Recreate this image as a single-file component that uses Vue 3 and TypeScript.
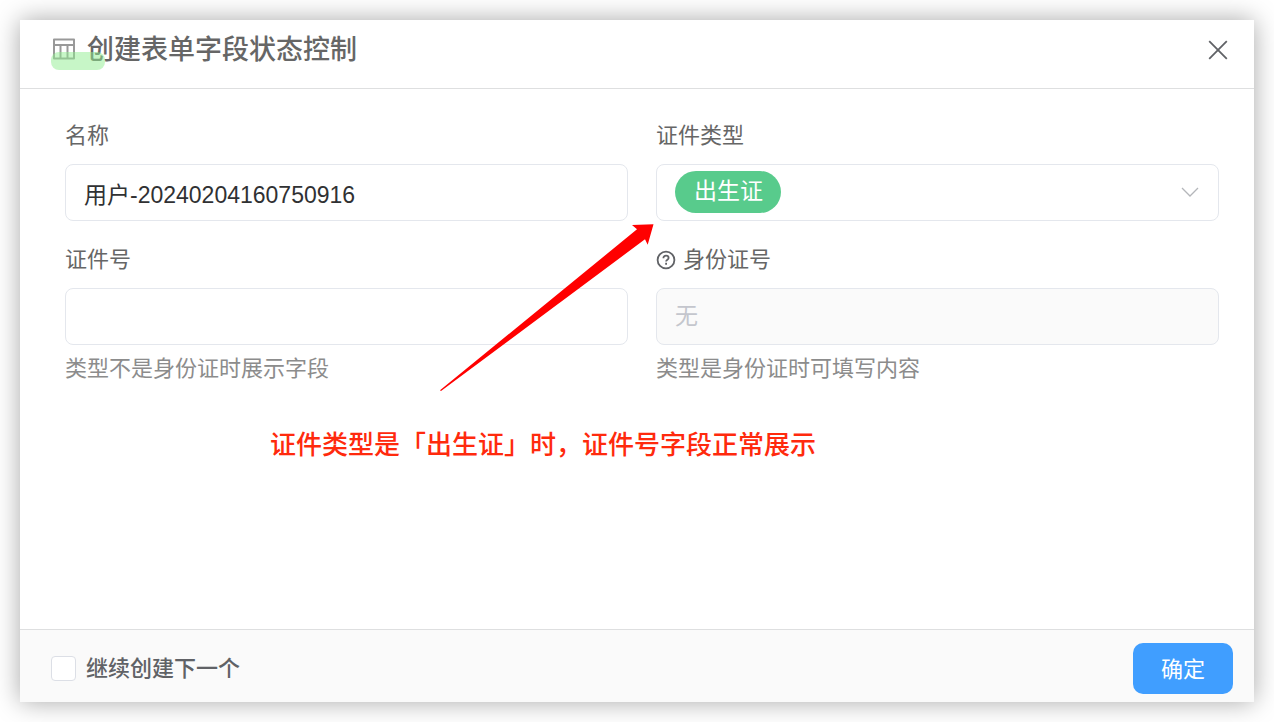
<script setup lang="ts">
import { computed, ref } from 'vue'

const name = ref('用户-20240204160750916')
const certTypes = ['出生证', '身份证', '护照']
const certType = ref('出生证')
const certNo = ref('')
const idNo = ref('')
const keepCreating = ref(false)

const idDisabled = computed(() => certType.value !== '身份证')
const tagStyle = computed(() => ({ width: `calc(${certType.value.length}em + 37px)` }))
</script>

<template>
  <section class="dialog" role="dialog" aria-labelledby="dialog-title">
    <header class="header">
      <span class="mark">
        <svg class="table-icon" viewBox="0 0 24 22" width="24" height="22" fill="none" stroke="#999" stroke-width="2" stroke-linejoin="round">
          <path d="M2 1.500h20v19H2zM2 7h20M8.500 7v13.500M15.500 7v13.500" />
        </svg>
        <i class="highlight"></i>
      </span>
      <h1 id="dialog-title" class="title">创建表单字段状态控制</h1>
      <button class="close" type="button" aria-label="关闭">
        <svg viewBox="0 0 20 20" width="20" height="20" fill="none" stroke="#606266" stroke-width="1.800">
          <path d="M1.200 1.200l17.600 17.600M18.800 1.200L1.200 18.800" />
        </svg>
      </button>
    </header>

    <main class="body">
      <form class="form" @submit.prevent>
        <div class="field">
          <label class="label" for="name">名称</label>
          <input id="name" v-model="name" class="control" type="text" />
        </div>
        <div class="field">
          <label class="label" for="cert-type">证件类型</label>
          <div class="select-box">
            <span class="tag" :style="tagStyle" aria-hidden="true"></span>
            <select id="cert-type" v-model="certType" class="control select">
              <option v-for="t in certTypes" :key="t" :value="t">{{ t }}</option>
            </select>
            <svg class="chevron" viewBox="0 0 18 10" width="18" height="10" fill="none" stroke="#b4b6ba" stroke-width="1.300">
              <path d="M1 1l8 8 8-8" />
            </svg>
          </div>
        </div>
        <div class="field">
          <label class="label" for="cert-no">证件号</label>
          <input id="cert-no" v-model="certNo" class="control" type="text" />
          <p class="help">类型不是身份证时展示字段</p>
        </div>
        <div class="field">
          <label class="label" for="id-no">
            <svg class="question" viewBox="0 0 20 20" width="20" height="20" fill="none" stroke="#606266" stroke-width="1.800">
              <circle cx="10" cy="10" r="8.400" />
              <path d="M7.400 8.300c0-1.600 1-2.600 2.600-2.600s2.600 1 2.600 2.300c0 1.700-2.500 1.700-2.500 3.500" />
              <path d="M10.100 12.800v1.900" />
            </svg>
            身份证号
          </label>
          <input id="id-no" v-model="idNo" class="control" type="text" placeholder="无" :disabled="idDisabled" />
          <p class="help">类型是身份证时可填写内容</p>
        </div>
      </form>

      <p class="note">证件类型是「出生证」时，证件号字段正常展示</p>
      <svg class="arrow" viewBox="0 0 214 168" width="214" height="168" fill="#f00" aria-hidden="true">
        <path d="M0 166.300L197 5.300L192 1L213.500 0.300L207.700 20.700L205 15.300L1 167Z" />
      </svg>
    </main>

    <footer class="footer">
      <label class="next">
        <input v-model="keepCreating" class="check" type="checkbox" />
        继续创建下一个
      </label>
      <button class="confirm" type="button">确定</button>
    </footer>
  </section>
</template>

<style>
body {
  margin: 0;
  background: #fff;
}
</style>

<style scoped>
.dialog,
.dialog * {
  box-sizing: border-box;
}
.dialog {
  display: flex;
  flex-direction: column;
  min-height: calc(100vh - 40px);
  margin: 20px;
  background: #fff;
  box-shadow: 0 0 24px rgba(0, 0, 0, 0.35);
  color: #606266;
  font-family: "Liberation Sans", "Noto Sans CJK SC", sans-serif;
  font-size: 22px;
  line-height: 30px;
}
.header {
  display: flex;
  align-items: center;
  padding: 0 26px 8px 32px;
  height: 69px;
  border-bottom: 1px solid #dedfe0;
}
.mark {
  position: relative;
  display: flex;
  margin-right: 11px;
  padding-bottom: 2px;
}
.highlight {
  position: absolute;
  left: -1px;
  top: 14px;
  width: 54px;
  height: 18px;
  border-radius: 8px;
  background: rgba(144, 238, 144, 0.5);
}
.title {
  margin: 0;
  font-size: 27px;
  font-weight: 500;
  line-height: 40px;
  color: #666;
}
.close {
  display: flex;
  margin-left: auto;
  padding: 0;
  border: 0;
  background: none;
  cursor: pointer;
}
.body {
  position: relative;
  flex: 1;
  padding: 32px 35px 31px 45px;
}
.form {
  display: grid;
  grid-template-columns: 1fr 1fr;
  gap: 24px 28px;
}
.label {
  display: flex;
  align-items: center;
  gap: 7px;
  margin-bottom: 13px;
  color: #666;
}
.control {
  display: block;
  width: 100%;
  height: 57px;
  margin: 0;
  padding: 0 18px;
  border: 1px solid #e4e7ed;
  border-radius: 8px;
  background: transparent;
  color: #303133;
  font-family: inherit;
  font-size: 23px;
  outline: none;
}
.control:focus {
  border-color: #409eff;
}
.control:disabled {
  background: #fafafa;
}
.control::placeholder {
  color: #c4c6cd;
}
.select-box {
  position: relative;
  font-size: 23px;
}
.select {
  position: relative;
  appearance: none;
  padding: 0 60px 3px 37px;
  color: #fff;
}
.select option {
  color: #303133;
}
.tag {
  position: absolute;
  left: 19px;
  top: 7px;
  height: 42px;
  border-radius: 21px;
  background: #58cb8c;
}
.chevron {
  position: absolute;
  right: 20px;
  top: 23px;
  pointer-events: none;
}
.help {
  margin: 9px 0 0;
  color: #8c8c8c;
}
.note {
  margin: 41px 0 0 205px;
  color: #ff2a0d;
  font-size: 26px;
  font-weight: 500;
  line-height: 40px;
}
.arrow {
  position: absolute;
  left: calc(50% - 197px);
  top: 135px;
  pointer-events: none;
}
.footer {
  display: flex;
  align-items: center;
  justify-content: space-between;
  padding: 13px 21px 8px 31px;
  border-top: 1px solid #dedfe0;
  background: #fafafa;
}
.next {
  display: flex;
  align-items: center;
  gap: 10px;
  font-weight: 500;
}
.check {
  appearance: none;
  width: 25px;
  height: 25px;
  margin: 0;
  border: 1px solid #dcdfe6;
  border-radius: 4px;
  background: #fff;
}
.check:checked {
  border-color: #409eff;
  background: #409eff;
}
.confirm {
  height: 51px;
  padding: 0 28px 4px;
  border: 0;
  border-radius: 10px;
  background: #409eff;
  color: #fff;
  font-family: inherit;
  font-size: 22px;
  cursor: pointer;
}
</style>
